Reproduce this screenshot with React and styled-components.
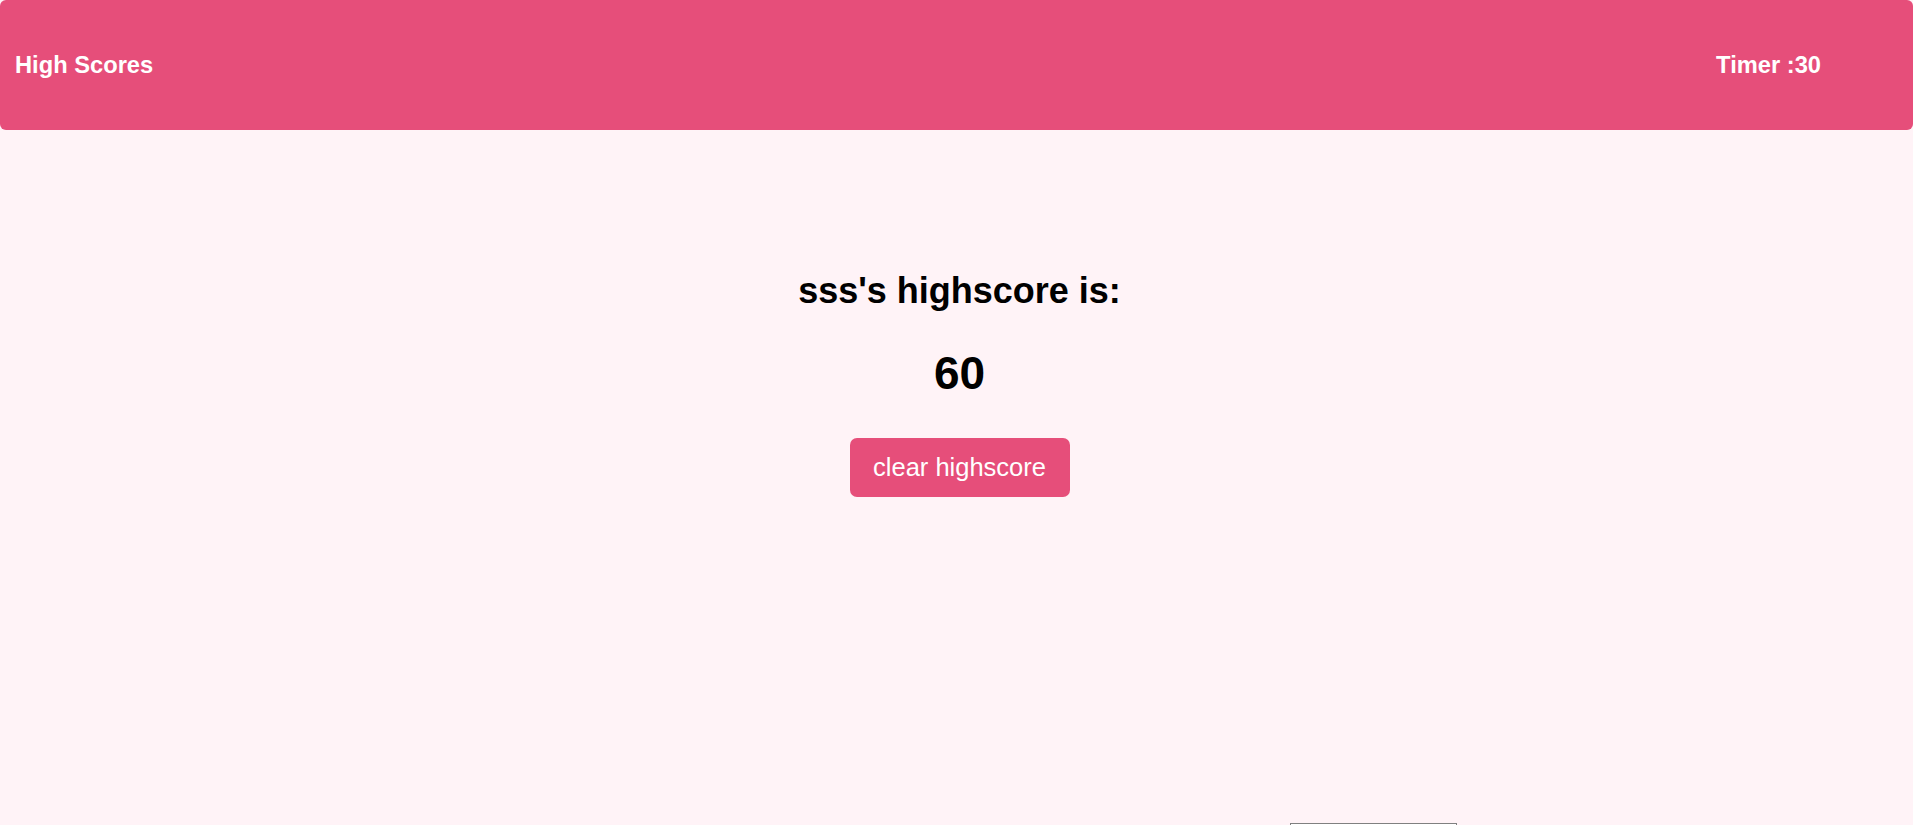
import styled, { createGlobalStyle } from "styled-components";

const GlobalStyle = createGlobalStyle`
  html, body {
    margin: 0;
    padding: 0;
    background: #fff3f7;
    font-family: "Liberation Sans", Arial, sans-serif;
    overflow: hidden;
  }
`;

/* PAGE */
const Page = styled.div`
  width: 100%;
  min-height: 825px;
  display: flex;
  flex-direction: column;
`;

/* TOP BAR */
const Header = styled.header`
  height: 130px;
  background: #e64e7a;
  border-radius: 6px;
  display: flex;
  align-items: center;
  justify-content: space-between;
  padding: 0 92px 0 15px;
  color: #ffffff;
`;

const HeaderText = styled.span`
  font-size: 23.7px;
  font-weight: bold;
`;

/* SCORE AREA */
const Main = styled.main`
  display: flex;
  flex-direction: column;
  align-items: center;
  padding: 140px 0 0 6px;
`;

const Title = styled.h2`
  margin: 0;
  font-size: 36px;
  font-weight: bold;
  color: #000;
`;

const Score = styled.div`
  margin-top: 34px;
  font-size: 46px;
  font-weight: bold;
  color: #000;
`;

const ClearButton = styled.button`
  margin-top: 38px;
  width: 220px;
  height: 59px;
  border: none;
  border-radius: 7px;
  background: #e64e7a;
  color: #ffffff;
  font-family: "Liberation Sans", Arial, sans-serif;
  font-size: 25.5px;
  cursor: pointer;
`;

/* BOTTOM ROW (mostly below the fold) */
const Footer = styled.div`
  margin-top: auto;
  display: flex;
  padding-left: 1290px;
  height: 2px;
`;

const NameInput = styled.input`
  width: 167px;
  height: 24px;
  margin: 0;
  padding: 0;
  border: 1px solid #808080;
  background: #fff;
  box-sizing: border-box;
`;

function App() {
  return (
    <>
      <GlobalStyle />
      <Page>
        <Header>
          <HeaderText>High Scores</HeaderText>
          <HeaderText>Timer :30</HeaderText>
        </Header>

        <Main>
          <Title>sss's highscore is:</Title>
          <Score>60</Score>
          <ClearButton>clear highscore</ClearButton>
        </Main>

        <Footer>
          <NameInput type="text" />
        </Footer>
      </Page>
    </>
  );
}

export default App;
